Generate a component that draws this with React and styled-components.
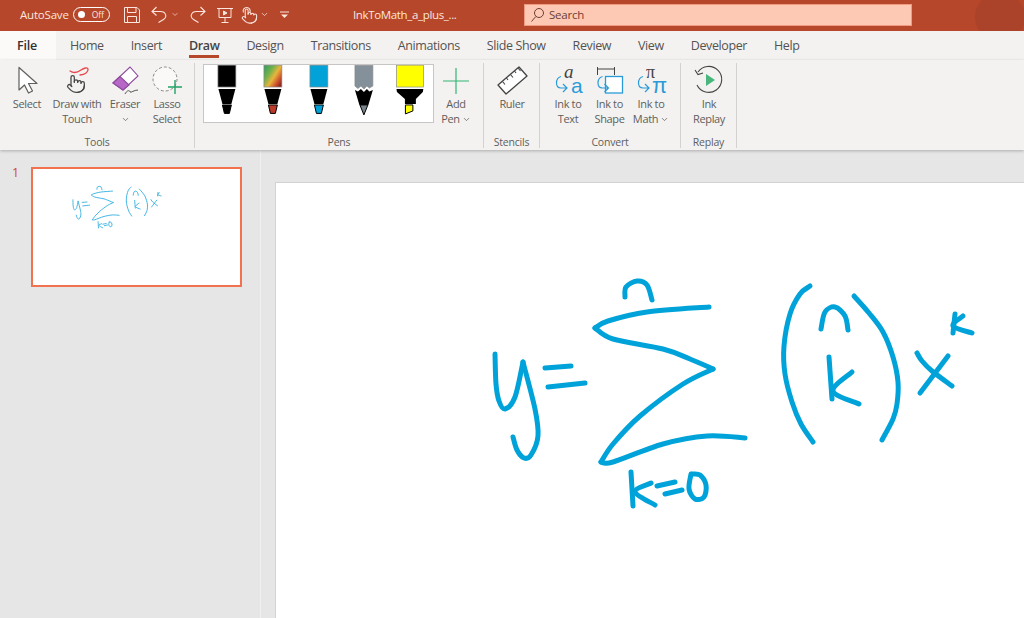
import React from "react";
import styled, { createGlobalStyle } from "styled-components";
import { ChevronDown, Pointer } from "lucide-react";

const GlobalStyle = createGlobalStyle`
	html, body {
		margin: 0;
		height: 100%;
		overflow: hidden;
		background: #e6e6e6;
		font-family: "Open Sans", "Noto Sans", "Liberation Sans", sans-serif;
	}
	* { box-sizing: border-box; }
`;

const Page = styled.div`
	width: 1024px;
	height: 618px;
	display: flex;
	flex-direction: column;
	overflow: hidden;
`;

const TitleBar = styled.header`
	height: 31px;
	flex: none;
	display: flex;
	align-items: center;
	background: #b7472a;
	color: #fff;
	padding: 0 0 2px 20px;
	position: relative;
	overflow: hidden;
`;

const AutoSave = styled.span`
	font-size: 11.5px;
	letter-spacing: -0.2px;
	width: 53px;
	color: #fbe5de;
`;

const Toggle = styled.span`
	width: 37px;
	height: 15px;
	border: 1px solid #fff;
	border-radius: 8px;
	display: flex;
	align-items: center;
	justify-content: space-between;
	padding: 0 5px 0 4px;
	font-size: 8.5px;
	margin-right: 8px;
	color: #fbe5de;
	&::before {
		content: "";
		width: 7px;
		height: 7px;
		border-radius: 50%;
		background: #fff;
	}
`;

const QuickIcon = styled.span`
	width: ${(p) => p.$w}px;
	flex: none;
	display: flex;
	justify-content: ${(p) => p.$justify || "center"};
	align-items: center;
	color: #fbe5de;
`;

const DocTitle = styled.span`
	font-size: 11.5px;
	letter-spacing: -0.35px;
	width: 171px;
	color: #fbe5de;
`;

const SearchBox = styled.div`
	width: 388px;
	height: 22px;
	background: #fdc9b5;
	border: 1px solid #ed9c82;
	display: flex;
	align-items: center;
	gap: 5px;
	padding-left: 6px;
	font-size: 11.5px;
	letter-spacing: -0.2px;
	color: #6b4034;
`;

const AccountBlob = styled.span`
	position: absolute;
	left: 975px;
	top: -8px;
	width: 50px;
	height: 50px;
	border-radius: 50%;
	background: #ab432a;
`;

const TabBar = styled.nav`
	height: 29px;
	flex: none;
	background: #f3f2f1;
	display: flex;
	align-items: stretch;
`;

const FileTab = styled.span`
	width: 56px;
	padding: 6px 0 0 17px;
	background: #fbfaf9;
	font-size: 12.5px;
	font-weight: 600;
	letter-spacing: -0.2px;
	color: #323130;
`;

const TabList = styled.div`
	display: flex;
	gap: 27px;
	padding-left: 14px;
`;

const Tab = styled.span`
	position: relative;
	padding-top: 6px;
	font-size: 12.5px;
	letter-spacing: -0.4px;
	white-space: nowrap;
	font-weight: ${(p) => (p.$active ? 600 : 400)};
	color: ${(p) => (p.$active ? "#444" : "#555351")};
	${(p) =>
		p.$active &&
		`&::after {
			content: "";
			position: absolute;
			left: 0;
			right: 0;
			bottom: 2px;
			height: 3px;
			background: #b7472a;
		}`}
`;

const Ribbon = styled.section`
	height: 90px;
	flex: none;
	background: #f3f2f1;
	display: flex;
	padding-top: 3px;
	box-shadow: 0 1px 3px rgba(0, 0, 0, 0.25);
	position: relative;
	z-index: 1;
`;

const Group = styled.div`
	width: ${(p) => p.$w}px;
	height: 85px;
	flex: none;
	display: flex;
	flex-direction: column;
	border-right: 1px solid #d4d2d0;
`;

const GroupBody = styled.div`
	height: 71px;
	flex: none;
	display: flex;
	padding-left: ${(p) => p.$pad || 0}px;
`;

const GroupLabel = styled.div`
	height: 14px;
	line-height: 16px;
	text-align: center;
	font-size: 10.5px;
	letter-spacing: -0.2px;
	color: #605e5c;
`;

const ToolButton = styled.div`
	width: ${(p) => p.$w}px;
	flex: none;
	display: flex;
	flex-direction: column;
	align-items: center;
`;

const ToolLabel = styled.div`
	font-size: 11px;
	line-height: 15px;
	letter-spacing: -0.35px;
	color: #605e5c;
	text-align: center;
	white-space: nowrap;
`;

const IconSlot = styled.div`
	height: 33px;
	flex: none;
	display: flex;
	align-items: center;
	justify-content: center;
`;

const InlineChevron = styled(ChevronDown)`
	margin-left: 2px;
	vertical-align: -1px;
`;

const PenGallery = styled.div`
	width: 231px;
	height: 59px;
	margin: 1px 0 0 8px;
	flex: none;
	background: #fff;
	border: 1px solid #c8c6c4;
	display: flex;
	overflow: hidden;
`;

const Workspace = styled.main`
	flex: 1;
	display: flex;
	min-height: 0;
	background: #e6e6e6;
`;

const SlidePanel = styled.aside`
	width: 261px;
	flex: none;
	display: flex;
	align-items: flex-start;
	padding: 17px 0 0 12px;
	border-right: 1px solid #f0f0f0;
`;

const SlideNumber = styled.span`
	width: 19px;
	font-size: 12.5px;
	line-height: 11px;
	color: #d24726;
`;

const Thumbnail = styled.div`
	position: relative;
	width: 211px;
	height: 120px;
	background: #fff;
	border: 2px solid #f2724f;
`;

const Canvas = styled.div`
	flex: 1;
	overflow: hidden;
	padding: 32px 0 0 14px;
`;

const Slide = styled.div`
	position: relative;
	width: 800px;
	height: 500px;
	background: #fff;
	border: 1px solid #d2d2d2;
`;

const InkLayer = styled.svg`
	position: absolute;
	left: ${(p) => p.$left}px;
	top: ${(p) => p.$top}px;
	fill: none;
	stroke: ${(p) => p.$color};
	stroke-linecap: round;
	stroke-linejoin: round;
	overflow: visible;
`;

const TouchWrap = styled.span`
	position: relative;
	display: block;
	width: 30px;
	height: 30px;
`;

const TouchHand = styled(Pointer)`
	position: absolute;
	left: 4px;
	top: 9px;
	color: #444;
`;

const TouchSquiggle = styled.svg`
	position: absolute;
	inset: 0;
`;

const GlyphIcon = styled.svg`
	overflow: visible;
`;

// turns a list of points into a smooth stroke (catmull-rom)
const smooth = (pts) => {
	let d = `M${pts[0][0]} ${pts[0][1]}`;
	for (let i = 0; i < pts.length - 1; i++) {
		const p0 = pts[i - 1] || pts[i];
		const p1 = pts[i];
		const p2 = pts[i + 1];
		const p3 = pts[i + 2] || p2;
		const c1x = p1[0] + (p2[0] - p0[0]) / 6;
		const c1y = p1[1] + (p2[1] - p0[1]) / 6;
		const c2x = p2[0] - (p3[0] - p1[0]) / 6;
		const c2y = p2[1] - (p3[1] - p1[1]) / 6;
		d += ` C${c1x} ${c1y} ${c2x} ${c2y} ${p2[0]} ${p2[1]}`;
	}
	return d;
};

const INK_STROKES = [
	[[495, 355], [496, 385], [499, 402], [505, 410], [515, 398], [523, 363]],
	[[523, 363], [535, 410], [538, 437], [531, 456], [524, 459], [517, 451], [513, 438]],
	[[545, 369], [571, 367]],
	[[548, 388], [585, 384]],
	[[709, 308], [647, 313], [608, 322], [595, 329]],
	[[595, 329], [613, 340], [663, 350], [690, 360], [713, 370]],
	[[713, 370], [683, 385], [640, 417], [613, 445], [601, 463]],
	[[601, 463], [613, 463], [663, 445], [707, 437], [745, 439]],
	[[625, 298], [626, 288], [637, 282], [647, 286], [652, 301]],
	[[631, 473], [633, 507]],
	[[651, 484], [635, 493], [655, 506]],
	[[657, 487], [675, 483]],
	[[665, 495], [682, 491]],
	[[691, 475], [689, 490], [695, 500], [704, 498], [706, 486], [700, 476], [692, 475]],
	[[810, 287], [800, 295], [790, 315], [784, 347], [785, 375], [792, 403], [801, 425], [813, 443]],
	[[854, 297], [869, 314], [883, 333], [893, 358], [898, 383], [897, 405], [893, 420], [882, 441]],
	[[821, 330], [825, 313], [835, 308], [845, 317], [848, 331]],
	[[829, 358], [832, 400]],
	[[852, 373], [833, 392], [859, 405]],
	[[917, 354], [922, 362], [932, 372], [952, 387]],
	[[948, 357], [920, 394]],
	[[955, 315], [953, 334]],
	[[963, 317], [953, 327], [972, 334]],
];

const InkEquation = ({ left, top, scale, color, strokeWidth }) => (
	<InkLayer
		$left={left}
		$top={top}
		$color={color}
		width={490 * scale}
		height={240 * scale}
		viewBox="490 275 490 240"
		strokeWidth={strokeWidth}
	>
		{INK_STROKES.map((pts, i) => (
			<path key={i} d={smooth(pts)} />
		))}
	</InkLayer>
);

const Pen = ({ fill, tip, wide }) => (
	<svg width="46" height="57" viewBox="0 0 46 57">
		{wide ? (
			<>
				<rect x="9.5" y="0" width="27" height="22" fill={fill} stroke="#8a8a8a" strokeWidth="0.7" />
				<path d="M9.5 24H36.5L36 27L29 34V39H18V34L10 27Z" fill="#000" />
				<path d="M18.5 40H26V46L18.5 49Z" fill={tip} stroke="#000" strokeWidth="1" />
			</>
		) : (
			<>
				<rect x="14" y="0" width="18" height="22" fill={fill} stroke="#8a8a8a" strokeWidth="0.7" />
				<path d="M14.5 24H31.5L27.5 39H18.5Z" fill="#000" />
				<path d="M18.5 40H27.5L25.5 48.5H20.5Z" fill={tip} stroke="#000" strokeWidth="1" />
			</>
		)}
	</svg>
);

const RainbowPen = () => (
	<svg width="46" height="57" viewBox="0 0 46 57">
		<defs>
			<linearGradient id="rainbow" x1="0" y1="0" x2="1" y2="0.8">
				<stop offset="0" stopColor="#2f9a62" />
				<stop offset="0.35" stopColor="#72b24a" />
				<stop offset="0.6" stopColor="#e9b43c" />
				<stop offset="0.85" stopColor="#c94f2d" />
				<stop offset="1" stopColor="#8f2a22" />
			</linearGradient>
		</defs>
		<rect x="14" y="0" width="18" height="22" fill="url(#rainbow)" stroke="#8a8a8a" strokeWidth="0.7" />
		<path d="M14.5 24H31.5L27.5 39H18.5Z" fill="#000" />
		<path d="M18.5 40H27.5L25.5 48.5H20.5Z" fill="#b93a28" stroke="#000" strokeWidth="1" />
	</svg>
);

const PencilPen = () => (
	<svg width="46" height="57" viewBox="0 0 46 57">
		<path d="M14 0H32V21L28.5 23L26 21L23 24L20 21L17 23.5L14 21Z" fill="#84919a" stroke="#8a8a8a" strokeWidth="0.7" />
		<path d="M14 25L17 26.5L20 24L23 27L26 24L28.5 26.5L32 25L27.5 40H18.5Z" fill="#000" />
		<path d="M19 40H27L23 50Z" fill="#77838b" stroke="#000" strokeWidth="1" />
	</svg>
);

const SelectIcon = () => (
	<svg width="30" height="30" viewBox="0 0 30 30">
		<path d="M7 2.5V25L12.5 20L16.5 28L20.5 26L16.5 18.5H25Z" fill="#fff" stroke="#5f5e5c" strokeWidth="1.2" strokeLinejoin="round" />
	</svg>
);

const TouchIcon = () => (
	<TouchWrap>
		<TouchSquiggle width="30" height="30" viewBox="0 0 30 30">
			<path d="M8 6C11 8 15 8 19 5C22 3 25.5 2 26 4C26.5 7 23 9.5 18 10" fill="none" stroke="#e8474c" strokeWidth="1.3" strokeLinecap="round" />
		</TouchSquiggle>
		<TouchHand size={20} strokeWidth={1.5} />
	</TouchWrap>
);

const EraserIcon = () => (
	<svg width="32" height="30" viewBox="0 0 32 30">
		<path d="M4 18L21 2L29 11L14 25Z" fill="#fff" stroke="#8c4a9e" strokeWidth="1.1" />
		<path d="M4 18L11 11.5L20 20L14 25Z" fill="#b768c6" stroke="#8c4a9e" strokeWidth="1.1" />
		<path d="M16 29C18 25 21 25 21 27C22 28 25 25 29 25" fill="none" stroke="#444" strokeWidth="0.9" />
	</svg>
);

const LassoIcon = () => (
	<svg width="32" height="30" viewBox="0 0 32 30">
		<circle cx="14" cy="14" r="12" fill="#faf9f8" stroke="#8a8886" strokeWidth="1" strokeDasharray="3 2" />
		<path d="M24 15V29M17 22H31" stroke="#21a366" strokeWidth="1.4" />
	</svg>
);

const AddPenIcon = () => (
	<svg width="30" height="30" viewBox="0 0 30 30">
		<path d="M15 3V29M2 16H28" stroke="#33b574" strokeWidth="1.2" />
	</svg>
);

const RulerIcon = () => (
	<svg width="34" height="32" viewBox="0 0 34 32">
		<path d="M3 21L24 3L32 12L11 30Z" fill="#fff" stroke="#444" strokeWidth="1.3" strokeLinejoin="round" />
		<path d="M7.5 17.5L10 20.5M11.5 14L13 16M15.5 10.5L18 13.5M19.5 7L21 9M23 4L25.5 7" stroke="#444" strokeWidth="1.1" />
	</svg>
);

const CurlArrow = ({ x = 0, y = 0 }) => (
	<path
		transform={`translate(${x} ${y})`}
		d="M5 0.5C1.5 1.5 0.5 4 0.5 7C0.5 10 2 12 5 12H11M7 8L11 12L7 16"
		fill="none"
		stroke="#2b9bd8"
		strokeWidth="1.2"
	/>
);

const InkGlyph = styled.text`
	font-family: "Liberation Serif", serif;
	fill: #444;
`;

const BlueGlyph = styled.text`
	font-family: "Liberation Sans", sans-serif;
	fill: #2b9bd8;
`;

const InkTextIcon = () => (
	<GlyphIcon width="32" height="32" viewBox="0 0 32 32">
		<InkGlyph x="12" y="14" fontSize="19" fontStyle="italic">a</InkGlyph>
		<CurlArrow x={4} y={12} />
		<BlueGlyph x="19" y="29" fontSize="21">a</BlueGlyph>
	</GlyphIcon>
);

const InkShapeIcon = () => (
	<svg width="32" height="32" viewBox="0 0 32 32">
		<path d="M3.5 3V11M3.5 5H20.5M20.5 3V11" fill="none" stroke="#444" strokeWidth="1" />
		<rect x="11.5" y="12.5" width="17" height="16.5" fill="#fff" stroke="#2b9bd8" strokeWidth="1.3" />
		<CurlArrow x={3.5} y={12} />
	</svg>
);

const InkMathIcon = () => (
	<GlyphIcon width="32" height="32" viewBox="0 0 32 32">
		<InkGlyph x="11" y="14" fontSize="18">π</InkGlyph>
		<CurlArrow x={3} y={12} />
		<BlueGlyph x="17" y="29" fontSize="22">π</BlueGlyph>
	</GlyphIcon>
);

const ReplayIcon = () => (
	<svg width="32" height="32" viewBox="0 0 32 32">
		<path d="M5 8A13 13 0 1 1 4 21" fill="none" stroke="#444" strokeWidth="1.1" />
		<path d="M2 6L5 10.5L10 9" fill="none" stroke="#444" strokeWidth="1.1" />
		<path d="M13 10L22 16L13 22Z" fill="#4ab57c" />
	</svg>
);

const SaveIcon = () => (
	<svg width="16" height="16" viewBox="0 0 16 16" fill="none" stroke="currentColor" strokeWidth="1">
		<path d="M0.5 0.5H13L15.5 3V15.5H0.5Z" />
		<path d="M3.5 0.5V5.5H12V0.5M3.5 15.5V9.5H12.5V15.5" />
	</svg>
);

const UndoIcon = () => (
	<svg width="16" height="17" viewBox="0 0 16 17" fill="none" stroke="currentColor" strokeWidth="1.1">
		<path d="M5.5 1L1 5.5L5.5 9.5M1 5.5H9.5C15 5.5 16.5 11 12.5 13.5L7.5 16.5" />
	</svg>
);

const RedoIcon = () => (
	<svg width="16" height="17" viewBox="0 0 16 17" fill="none" stroke="currentColor" strokeWidth="1.1">
		<path d="M10.5 1L15 5.5L10.5 9.5M15 5.5H6.5C1 5.5 -0.5 11 3.5 13.5L8.5 16.5" />
	</svg>
);

const PresentIcon = () => (
	<svg width="16" height="16" viewBox="0 0 16 16" fill="none" stroke="currentColor" strokeWidth="1">
		<path d="M0 1.5H16M2 1.5V10.5H14V1.5M8 10.5V15M4.5 15.5H11.5" />
		<path d="M6.5 4L10 6L6.5 8Z" fill="currentColor" />
	</svg>
);

const TouchModeIcon = () => (
	<svg width="17" height="18" viewBox="0 0 24 25" fill="none" stroke="currentColor" strokeWidth="1.5">
		<g transform="translate(0 2)">
			<path d="M22 14a8 8 0 0 1-8 8" />
			<path d="M18 11v-1a2 2 0 0 0-2-2a2 2 0 0 0-2 2" />
			<path d="M14 10V9a2 2 0 0 0-2-2a2 2 0 0 0-2 2v1" />
			<path d="M10 9.5V4a2 2 0 0 0-2-2a2 2 0 0 0-2 2v10" />
			<path d="M18 11a2 2 0 1 1 4 0v3a8 8 0 0 1-8 8h-2c-2.8 0-4.5-.86-5.99-2.34l-3.6-3.6a2 2 0 0 1 2.83-2.82L7 15" />
			<path d="M3.5 7A5 5 0 1 1 12.5 7" />
		</g>
	</svg>
);

const CustomizeIcon = () => (
	<svg width="9" height="8" viewBox="0 0 9 8" fill="none" stroke="currentColor">
		<path d="M0 1H9" />
		<path d="M1 3.5L4.5 7L8 3.5Z" fill="currentColor" stroke="none" />
	</svg>
);

const SearchGlyph = () => (
	<svg width="13" height="14" viewBox="0 0 13 14" fill="none" stroke="#6b4034" strokeWidth="1">
		<circle cx="8" cy="5" r="4.5" />
		<path d="M4.8 8.5L0.5 13.5" />
	</svg>
);

const TABS = ["Home", "Insert", "Draw", "Design", "Transitions", "Animations", "Slide Show", "Review", "View", "Developer", "Help"];

const Chev = () => <InlineChevron size={9} strokeWidth={2} />;

const App = () => {
	return (
		<Page>
			<GlobalStyle />
			<TitleBar>
				<AutoSave>AutoSave</AutoSave>
				<Toggle>Off</Toggle>
				<QuickIcon $w={28}><SaveIcon /></QuickIcon>
				<QuickIcon $w={25}><UndoIcon /></QuickIcon>
				<QuickIcon $w={8}><ChevronDown size={9} strokeWidth={2} /></QuickIcon>
				<QuickIcon $w={37}><RedoIcon /></QuickIcon>
				<QuickIcon $w={17}><PresentIcon /></QuickIcon>
				<QuickIcon $w={25} $justify="flex-end"><TouchModeIcon /></QuickIcon>
				<QuickIcon $w={12}><ChevronDown size={9} strokeWidth={2} /></QuickIcon>
				<QuickIcon $w={28}><CustomizeIcon /></QuickIcon>
				<QuickIcon $w={55} />
				<DocTitle>InkToMath_a_plus_...</DocTitle>
				<SearchBox><SearchGlyph />Search</SearchBox>
				<AccountBlob />
			</TitleBar>

			<TabBar>
				<FileTab>File</FileTab>
				<TabList>
					{TABS.map((tab) => (
						<Tab key={tab} $active={tab === "Draw"}>{tab}</Tab>
					))}
				</TabList>
			</TabBar>

			<Ribbon>
				<Group $w={195}>
					<GroupBody $pad={5}>
						<ToolButton $w={44}><IconSlot><SelectIcon /></IconSlot><ToolLabel>Select</ToolLabel></ToolButton>
						<ToolButton $w={56}><IconSlot><TouchIcon /></IconSlot><ToolLabel>Draw with<br />Touch</ToolLabel></ToolButton>
						<ToolButton $w={40}><IconSlot><EraserIcon /></IconSlot><ToolLabel>Eraser<br /><Chev /></ToolLabel></ToolButton>
						<ToolButton $w={44}><IconSlot><LassoIcon /></IconSlot><ToolLabel>Lasso<br />Select</ToolLabel></ToolButton>
					</GroupBody>
					<GroupLabel>Tools</GroupLabel>
				</Group>
				<Group $w={289}>
					<GroupBody>
						<PenGallery>
							<Pen fill="#000" tip="#000" />
							<RainbowPen />
							<Pen fill="#00a2d8" tip="#00a2d8" />
							<PencilPen />
							<Pen fill="#ffff00" tip="#ffff00" wide />
						</PenGallery>
						<ToolButton $w={44}><IconSlot><AddPenIcon /></IconSlot><ToolLabel>Add<br />Pen<Chev /></ToolLabel></ToolButton>
					</GroupBody>
					<GroupLabel>Pens</GroupLabel>
				</Group>
				<Group $w={56}>
					<GroupBody>
						<ToolButton $w={56}><IconSlot><RulerIcon /></IconSlot><ToolLabel>Ruler</ToolLabel></ToolButton>
					</GroupBody>
					<GroupLabel>Stencils</GroupLabel>
				</Group>
				<Group $w={141}>
					<GroupBody $pad={7}>
						<ToolButton $w={42}><IconSlot><InkTextIcon /></IconSlot><ToolLabel>Ink to<br />Text</ToolLabel></ToolButton>
						<ToolButton $w={41}><IconSlot><InkShapeIcon /></IconSlot><ToolLabel>Ink to<br />Shape</ToolLabel></ToolButton>
						<ToolButton $w={42}><IconSlot><InkMathIcon /></IconSlot><ToolLabel>Ink to<br />Math<Chev /></ToolLabel></ToolButton>
					</GroupBody>
					<GroupLabel>Convert</GroupLabel>
				</Group>
				<Group $w={56}>
					<GroupBody>
						<ToolButton $w={56}><IconSlot><ReplayIcon /></IconSlot><ToolLabel>Ink<br />Replay</ToolLabel></ToolButton>
					</GroupBody>
					<GroupLabel>Replay</GroupLabel>
				</Group>
			</Ribbon>

			<Workspace>
				<SlidePanel>
					<SlideNumber>1</SlideNumber>
					<Thumbnail>
						<InkEquation left={39} top={16} scale={0.185} color="#35b1e2" strokeWidth={5} />
					</Thumbnail>
				</SlidePanel>
				<Canvas>
					<Slide>
						<InkEquation left={214} top={91} scale={1} color="#00a3d9" strokeWidth={5} />
					</Slide>
				</Canvas>
			</Workspace>
		</Page>
	);
};

export default App;
